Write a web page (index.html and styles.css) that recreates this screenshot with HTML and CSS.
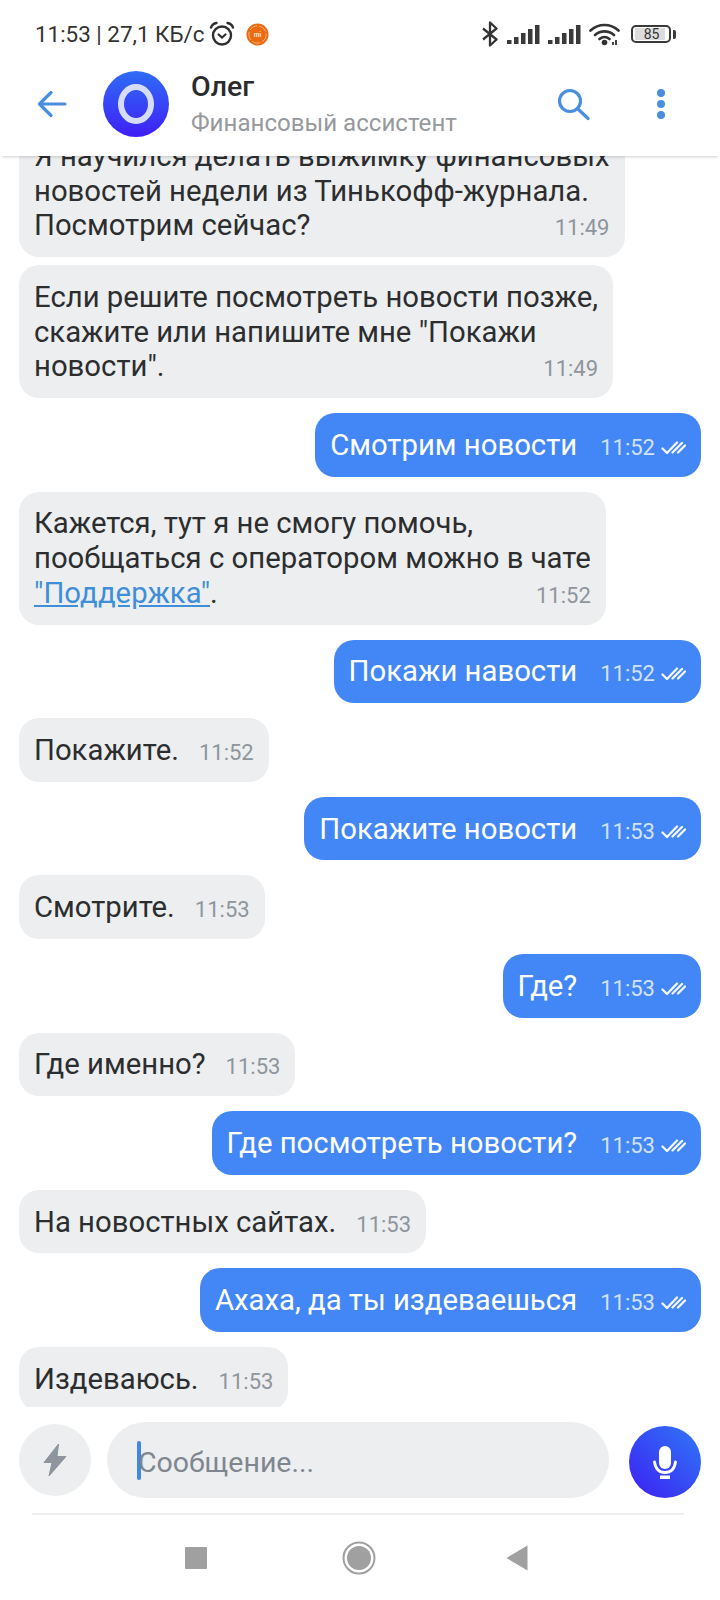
FILE: index.html
```html
<!DOCTYPE html>
<html lang="ru">
<head>
    <meta charset="UTF-8">
    <meta name="viewport" content="width=device-width, initial-scale=1.0">
    <title>Олег</title>
    <link rel="stylesheet" href="styles.css">
</head>
<body>
    <svg class="defs" width="0" height="0">
        <defs>
            <linearGradient id="grad-avatar" x1="0" y1="0" x2="0" y2="1">
                <stop offset="0" stop-color="#2f6cf6"/>
                <stop offset="1" stop-color="#3f1ff5"/>
            </linearGradient>
            <linearGradient id="grad-mic" x1="1" y1="0" x2="0" y2="1">
                <stop offset="0" stop-color="#2f78f7"/>
                <stop offset="1" stop-color="#3d1ff3"/>
            </linearGradient>
            <symbol id="ticks" viewBox="0 0 25 15">
                <path d="M1.500 8.500l4.500 4.500L16 2.500M11.500 12.500L21 3M17 12.500L24 5.500" fill="none" stroke="currentColor" stroke-width="2.300" stroke-linecap="round" stroke-linejoin="round"/>
            </symbol>
        </defs>
    </svg>

    <div class="status-bar">
        <span class="status-text">11:53 | 27,1 КБ/с</span>
        <svg class="alarm" width="26" height="26" viewBox="0 0 26 26">
            <circle cx="13" cy="14.500" r="9" fill="none" stroke="#2e2e2e" stroke-width="2.400"/>
            <path d="M9.500 13.500l3.500 3 3.500-3" fill="none" stroke="#2e2e2e" stroke-width="2.200" stroke-linecap="round"/>
            <path d="M2 6.500C3 3.800 5 2.400 7.500 2M24 6.500C23 3.800 21 2.400 18.500 2" fill="none" stroke="#2e2e2e" stroke-width="2.400" stroke-linecap="round"/>
        </svg>
        <svg class="mi" width="23" height="23" viewBox="0 0 24 24">
            <circle cx="12" cy="12" r="11.500" fill="#ee6a10"/>
            <circle cx="12" cy="12" r="9" fill="none" stroke="#f9c9a2" stroke-width=".8" stroke-dasharray="9 2"/>
            <text x="12" y="14.500" class="mi-text" text-anchor="middle">mi</text>
        </svg>
        <div class="status-right">
            <svg width="18" height="26" viewBox="0 0 18 26">
                <path d="M2 7.500L15.500 18.500 9 24.500V1.500L15.500 7.500 2 18.500" fill="none" stroke="#333" stroke-width="2.300" stroke-linejoin="round"/>
            </svg>
            <svg class="signal" width="33" height="21" viewBox="0 0 33 21">
                <path d="M0 16h4.500v4H0zM7 13h4.500v7H7zM14 9h4.500v11H14zM21 5h4.500v15H21zM28 1h4.500v19H28z" fill="#3a3a3a"/>
            </svg>
            <svg class="signal" width="33" height="21" viewBox="0 0 33 21">
                <path d="M0 16h4.500v4H0zM7 13h4.500v7H7zM14 9h4.500v11H14zM21 5h4.500v15H21zM28 1h4.500v19H28z" fill="#3a3a3a"/>
            </svg>
            <svg class="wifi" width="32" height="24" viewBox="0 0 32 24">
                <path d="M1.500 8.500C9.500 1.200 21.500 1.200 29.500 8.500M6 13c5.500-4.800 13.500-4.800 19 0M10.500 17c3-2.400 7-2.400 10 0" fill="none" stroke="#333" stroke-width="2.600" stroke-linecap="round"/>
                <circle cx="15.500" cy="20.500" r="2.800" fill="#333"/>
                <path d="M24 23v-3M27 23v-5" stroke="#333" stroke-width="1.800"/>
            </svg>
            <div class="battery">
                <div class="battery-body"><span class="battery-level">85</span></div>
                <div class="battery-cap"></div>
            </div>
        </div>
    </div>

    <div class="chat-header">
        <svg class="back" width="30" height="28" viewBox="0 0 30 28">
            <path d="M28 14H3M14 2.500L2.500 14 14 25.500" fill="none" stroke="#4a8ee0" stroke-width="3.200" stroke-linecap="round" stroke-linejoin="round"/>
        </svg>
        <svg class="avatar" width="66" height="66" viewBox="0 0 66 66">
            <circle cx="33" cy="33" r="33" fill="url(#grad-avatar)"/>
            <ellipse cx="33" cy="33" rx="15" ry="17" fill="none" stroke="#d6dcfb" stroke-width="6"/>
        </svg>
        <div class="chat-title">
            <div class="chat-name">Олег</div>
            <div class="chat-sub">Финансовый ассистент</div>
        </div>
        <svg class="search" width="34" height="34" viewBox="0 0 34 34">
            <circle cx="14" cy="14" r="10.500" fill="none" stroke="#4a8ee0" stroke-width="3.200"/>
            <path d="M22 22l10 9.500" fill="none" stroke="#4a8ee0" stroke-width="3.200" stroke-linecap="round"/>
        </svg>
        <div class="dots"><i></i><i></i><i></i></div>
    </div>

    <div class="messages">
        <div class="bubble in multi">
            <div>Я научился делать выжимку финансовых</div>
            <div>новостей недели из Тинькофф-журнала.</div>
            <div class="last-line"><span>Посмотрим сейчас?</span><span class="time">11:49</span></div>
        </div>
        <div class="bubble in multi">
            <div>Если решите посмотреть новости позже,</div>
            <div>скажите или напишите мне "Покажи</div>
            <div class="last-line"><span>новости".</span><span class="time">11:49</span></div>
        </div>
        <div class="bubble out">
            <div class="last-line"><span>Смотрим новости</span><span class="time">11:52</span><svg class="tick"><use href="#ticks"/></svg></div>
        </div>
        <div class="bubble in multi">
            <div>Кажется, тут я не смогу помочь,</div>
            <div>пообщаться с оператором можно в чате</div>
            <div class="last-line"><span><a class="link">"Поддержка"</a>.</span><span class="time">11:52</span></div>
        </div>
        <div class="bubble out">
            <div class="last-line"><span>Покажи навости</span><span class="time">11:52</span><svg class="tick"><use href="#ticks"/></svg></div>
        </div>
        <div class="bubble in">
            <div class="last-line"><span>Покажите.</span><span class="time">11:52</span></div>
        </div>
        <div class="bubble out">
            <div class="last-line"><span>Покажите новости</span><span class="time">11:53</span><svg class="tick"><use href="#ticks"/></svg></div>
        </div>
        <div class="bubble in">
            <div class="last-line"><span>Смотрите.</span><span class="time">11:53</span></div>
        </div>
        <div class="bubble out">
            <div class="last-line"><span>Где?</span><span class="time">11:53</span><svg class="tick"><use href="#ticks"/></svg></div>
        </div>
        <div class="bubble in">
            <div class="last-line"><span>Где именно?</span><span class="time">11:53</span></div>
        </div>
        <div class="bubble out">
            <div class="last-line"><span>Где посмотреть новости?</span><span class="time">11:53</span><svg class="tick"><use href="#ticks"/></svg></div>
        </div>
        <div class="bubble in">
            <div class="last-line"><span>На новостных сайтах.</span><span class="time">11:53</span></div>
        </div>
        <div class="bubble out">
            <div class="last-line"><span>Ахаха, да ты издеваешься</span><span class="time">11:53</span><svg class="tick"><use href="#ticks"/></svg></div>
        </div>
        <div class="bubble in cut">
            <div class="last-line"><span>Издеваюсь.</span><span class="time">11:53</span></div>
        </div>
    </div>

    <div class="composer">
        <div class="bolt-btn">
            <svg width="24" height="34" viewBox="0 0 24 34">
                <path d="M15.500 1L1 19.500h8L6 33l17-19.500h-9z" fill="#8f959e" stroke="#8f959e" stroke-width="1" stroke-linejoin="round"/>
            </svg>
        </div>
        <div class="input-box"><span class="caret"></span><span class="placeholder">Сообщение...</span></div>
        <div class="mic-btn">
            <svg width="72" height="72" viewBox="0 0 72 72">
                <circle cx="36" cy="36" r="36" fill="url(#grad-mic)"/>
                <rect x="30" y="20" width="12" height="23" rx="6" fill="#fff"/>
                <path d="M25.500 36c1 7 5 10.500 10.500 10.500S45.500 43 46.500 36" fill="none" stroke="#fff" stroke-width="2.800" stroke-linecap="round"/>
                <rect x="31" y="49.500" width="10" height="3.500" fill="#fff"/>
            </svg>
        </div>
    </div>

    <div class="nav-bar">
        <div class="nav-square"></div>
        <svg class="nav-home" width="34" height="34" viewBox="0 0 34 34">
            <circle cx="17" cy="17" r="15.500" fill="none" stroke="#a0a0a0" stroke-width="2"/>
            <circle cx="17" cy="17" r="12" fill="#a0a0a0"/>
        </svg>
        <svg class="nav-back" width="22" height="26" viewBox="0 0 22 26">
            <path d="M21.500 .5v25L.5 13z" fill="#a0a0a0"/>
        </svg>
    </div>
</body>
</html>
```

FILE: styles.css
```css
body {
    font-family: Roboto, "Liberation Sans", sans-serif;
    background-color: #fff;
    color: #2c2d2f;
    margin: 0;
    width: 720px;
    height: 1600px;
    display: flex;
    flex-direction: column;
    overflow: hidden;
}
.defs {
    position: absolute;
}
.status-bar {
    height: 68px;
    flex: none;
    display: flex;
    align-items: center;
    padding: 0 44px 0 35px;
    color: #333;
}
.status-text {
    font-size: 22.4px;
    white-space: nowrap;
}
.alarm {
    margin-left: 4px;
}
.mi {
    margin-left: 11px;
}
.mi-text {
    font-family: Roboto, sans-serif;
    font-size: 7px;
    font-weight: 700;
    fill: #fde3cf;
}
.status-right {
    margin-left: auto;
    display: flex;
    align-items: center;
}
.signal {
    margin-left: 8px;
}
.wifi {
    margin-left: 8px;
}
.battery {
    display: flex;
    align-items: center;
    margin-left: 10px;
}
.battery-body {
    width: 32px;
    height: 12px;
    border: 2px solid #3a3a3a;
    border-radius: 5px;
    padding: 1px 2px;
    display: flex;
}
.battery-level {
    background-color: #dcdcdc;
    width: 85%;
    font-size: 14px;
    line-height: 12px;
    text-align: center;
    color: #333;
    padding-left: 3px;
}
.battery-cap {
    width: 3px;
    height: 9px;
    margin-left: 2px;
    border-radius: 0 2px 2px 0;
    background-color: #3a3a3a;
}
.chat-header {
    height: 72px;
    padding-bottom: 16px;
    flex: none;
    display: flex;
    align-items: center;
    background-color: #fff;
    box-shadow: 0 3px 3px -2px rgba(0, 0, 0, 0.18);
    position: relative;
    z-index: 2;
}
.back {
    margin-left: 37px;
}
.avatar {
    margin-left: 36px;
}
.chat-title {
    margin-left: 22px;
    margin-top: 2px;
}
.chat-name {
    font-size: 28.5px;
    font-weight: 500;
    line-height: 34px;
    color: #2a2b2d;
}
.chat-sub {
    font-size: 24.1px;
    line-height: 34px;
    margin-top: 2px;
    color: #96999d;
}
.search {
    margin-left: auto;
}
.dots {
    display: flex;
    flex-direction: column;
    gap: 3px;
    margin-left: 67px;
    margin-right: 55px;
}
.dots i {
    width: 8px;
    height: 8px;
    border-radius: 50%;
    background-color: #4a8ee0;
}
.messages {
    flex: 1;
    min-height: 0;
    overflow: hidden;
    display: flex;
    flex-direction: column;
    justify-content: flex-end;
    padding: 0 19px;
}
.bubble {
    font-size: 29.3px;
    line-height: 35px;
    padding: 14.8px 15px 13.8px;
    border-radius: 20px;
    white-space: nowrap;
    flex: none;
    margin-top: 15px;
}
.bubble.multi {
    line-height: 34.8px;
}
.bubble.in {
    align-self: flex-start;
    background-color: #eceef0;
}
.bubble.out {
    align-self: flex-end;
    background-color: #4387f6;
    color: #fff;
}
.bubble.in + .bubble.in {
    margin-top: 8px;
}
.bubble.cut {
    margin-bottom: -3.5px;
}
.last-line {
    display: flex;
    align-items: flex-end;
}
.time {
    margin-left: auto;
    padding-left: 20px;
    font-size: 22px;
    line-height: 30px;
    color: #8f959c;
}
.bubble.out .time {
    padding-left: 23px;
    color: #d3e2fc;
}
.tick {
    width: 25px;
    height: 15px;
    margin: 0 0 8px 6px;
    color: #f2f6fe;
}
.link {
    color: #3f8fd8;
    text-decoration: underline;
}
.composer {
    height: 106px;
    flex: none;
    display: flex;
    align-items: center;
    padding: 0 19px;
}
.bolt-btn {
    width: 72px;
    height: 72px;
    border-radius: 50%;
    background-color: #eceef0;
    display: flex;
    align-items: center;
    justify-content: center;
}
.input-box {
    flex: 1;
    height: 76px;
    margin: 0 20px 0 16px;
    border-radius: 38px;
    background-color: #eceef0;
    display: flex;
    align-items: center;
    padding-left: 30px;
    font-size: 28.5px;
    color: #7f868f;
}
.placeholder {
    padding-top: 4px;
}
.caret {
    width: 4px;
    height: 39px;
    margin-right: -3px;
    border-radius: 2px;
    background-color: #4387e6;
}
.mic-btn {
    width: 72px;
    height: 72px;
    margin-top: 3px;
}
.nav-bar {
    height: 87px;
    flex: none;
    margin: 0 36px 0 32px;
    border-top: 2px solid #eceef0;
    display: flex;
    align-items: center;
    padding-left: 153px;
    box-sizing: border-box;
}
.nav-square {
    width: 22px;
    height: 22px;
    border-radius: 1px;
    background-color: #a0a0a0;
}
.nav-home {
    margin-left: 135px;
}
.nav-back {
    margin-left: 130px;
}
```
